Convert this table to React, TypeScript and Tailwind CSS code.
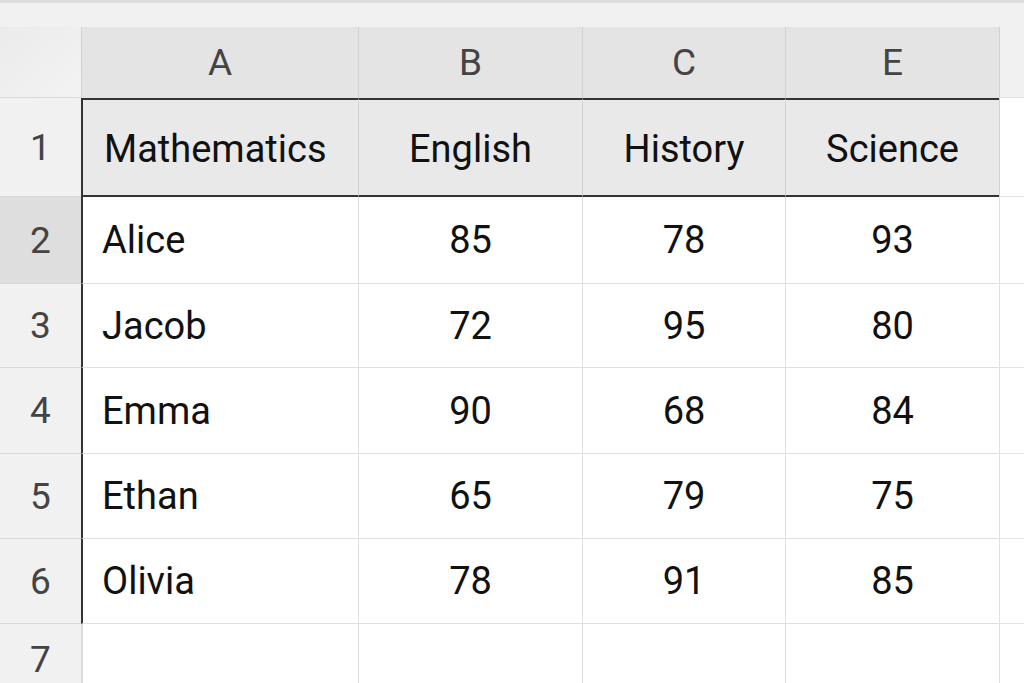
import React from 'react';

const cols = [
  { key: 'A', width: 'w-[277px]' },
  { key: 'B', width: 'w-[224px]' },
  { key: 'C', width: 'w-[203px]' },
  { key: 'E', width: 'w-[214px]' },
];

const subjects = ['Mathematics', 'English', 'History', 'Science'];

const rows: { n: number; h: string; cells: string[] }[] = [
  { n: 2, h: 'h-[87px]', cells: ['Alice', '85', '78', '93'] },
  { n: 3, h: 'h-[84px]', cells: ['Jacob', '72', '95', '80'] },
  { n: 4, h: 'h-[86px]', cells: ['Emma', '90', '68', '84'] },
  { n: 5, h: 'h-[85px]', cells: ['Ethan', '65', '79', '75'] },
  { n: 6, h: 'h-[85px]', cells: ['Olivia', '78', '91', '85'] },
];

export default function App() {
  return (
    <div className="h-screen w-full overflow-hidden bg-white font-['Roboto',sans-serif] text-[38px] leading-none">
      {/* top toolbar strip */}
      <div className="h-[27px] border-t-[3px] border-[#dedede] bg-[#f1f1f1]" />

      {/* column letters */}
      <div className="flex h-[71px] text-[37px]">
        <div className="w-[81px] shrink-0 bg-linear-to-br from-[#ebebeb] to-[#f3f3f3] border-b border-[#dadada]" />
        {cols.map((c) => (
          <div
            key={c.key}
            className={`${c.width} shrink-0 flex items-center justify-center bg-[#e4e4e4] border-l border-[#d2d2d2] text-[#444]`}
          >
            {c.key}
          </div>
        ))}
        <div className="flex-1 bg-[#f1f1f1] border-l border-[#d2d2d2] border-b border-b-[#e2e2e2]" />
      </div>

      {/* row 1: subjects */}
      <div className="flex h-[99px]">
        <div className="w-[81px] shrink-0 flex items-center justify-center bg-[#f1f1f1] border-b border-[#dadada] text-[#444] text-[37px]">
          1
        </div>
        {subjects.map((s, i) => (
          <div
            key={s}
            className={`${cols[i].width} shrink-0 flex items-center bg-[#e9e9e9] border-y-2 border-y-[#333] text-[#111] pt-[3px] ${
              i === 0 ? 'border-l-2 border-l-[#333] pl-[21px]' : 'border-l border-l-[#d2d2d2] justify-center'
            }`}
          >
            {s}
          </div>
        ))}
        <div className="flex-1 border-l border-[#d2d2d2] border-b border-b-[#e2e2e2]" />
      </div>

      {/* data rows */}
      {rows.map((r) => (
        <div key={r.n} className={`flex ${r.h}`}>
          <div
            className={`w-[81px] shrink-0 flex items-center justify-center border-b border-[#dadada] text-[#444] text-[37px] ${
              r.n === 2 ? 'bg-[#dedede]' : 'bg-[#f1f1f1]'
            }`}
          >
            {r.n}
          </div>
          {r.cells.map((v, i) => (
            <div
              key={i}
              className={`${cols[i].width} shrink-0 flex items-center border-b border-[#e0e0e0] text-[#111] ${
                i === 0 ? 'border-l-2 border-l-[#333] pl-[19px]' : 'border-l border-l-[#e0e0e0] justify-center'
              }`}
            >
              {v}
            </div>
          ))}
          <div className="flex-1 border-l border-[#e0e0e0] border-b border-b-[#e6e6e6]" />
        </div>
      ))}

      {/* row 7: empty */}
      <div className="flex h-[70px]">
        <div className="w-[81px] shrink-0 flex items-center justify-center bg-[#f1f1f1] text-[#444] text-[37px]">7</div>
        {cols.map((c, i) => (
          <div
            key={c.key}
            className={`${c.width} shrink-0 ${i === 0 ? 'border-l-2 border-l-[#dcdcdc]' : 'border-l border-l-[#e0e0e0]'}`}
          />
        ))}
        <div className="flex-1 border-l border-[#e0e0e0]" />
      </div>
    </div>
  );
}
